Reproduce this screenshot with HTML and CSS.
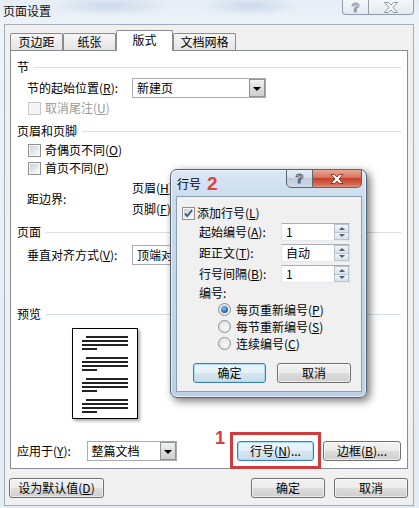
FILE: index.html
```html
<!DOCTYPE html>
<html>
<head>
<meta charset="utf-8">
<link rel="stylesheet" href="styles.css">
</head>
<body>
<div class="win">
  <div class="titlebar">
    <span class="title">页面设置</span>
    <div class="caps">
      <span class="cap cap-help"><span class="q">?</span></span>
      <span class="cap cap-close"><svg width="18" height="11" viewBox="0 0 18 11"><path d="M2.5 0.5h4l2.5 2.6 2.5-2.6h4l-4.5 5 4.5 5h-4l-2.5-2.6-2.5 2.6h-4l4.5-5z" fill="#f6f8fa" stroke="#8d98a4" stroke-width="1"/></svg></span>
    </div>
  </div>

  <div class="client">
    <div class="tabs">
      <div class="tab t1">页边距</div>
      <div class="tab t2">纸张</div>
      <div class="tab t3 sel">版式</div>
      <div class="tab t4">文档网格</div>
    </div>

    <div class="panel">
      <div class="grp g1"><span>节</span></div>
      <div class="row r-start">
        <span class="lbl">节的起始位置(<u>R</u>):</span>
        <div class="combo w133"><span class="ctext">新建页</span><span class="dd"><i></i></span></div>
      </div>
      <div class="row chk r-endnote"><span class="cb dis"></span><span class="dis-t">取消尾注(<u>U</u>)</span></div>

      <div class="grp g2"><span>页眉和页脚</span></div>
      <div class="row chk r-odd"><span class="cb"></span><span>奇偶页不同(<u>O</u>)</span></div>
      <div class="row chk r-first"><span class="cb"></span><span>首页不同(<u>P</u>)</span></div>
      <div class="row r-edge">
        <span class="lbl">距边界:</span>
        <div class="edge-col">
          <div class="edge-row"><span class="elbl">页眉(<u>H</u>):</span><span class="in"></span></div>
          <div class="edge-row"><span class="elbl">页脚(<u>F</u>):</span><span class="in"></span></div>
        </div>
      </div>

      <div class="grp g3"><span>页面</span></div>
      <div class="row r-valign">
        <span class="lbl">垂直对齐方式(<u>V</u>):</span>
        <div class="combo w133"><span class="ctext">顶端对齐</span><span class="dd"><i></i></span></div>
      </div>

      <div class="grp g4"><span>预览</span></div>
      <div class="page">
        <div class="para"><i class="ln first"></i><i class="ln"></i><i class="ln"></i><i class="ln short"></i></div>
        <div class="para"><i class="ln first"></i><i class="ln"></i><i class="ln"></i><i class="ln short"></i></div>
        <div class="para"><i class="ln first"></i><i class="ln"></i><i class="ln"></i><i class="ln short"></i></div>
        <div class="para"><i class="ln first"></i><i class="ln"></i><i class="ln"></i><i class="ln short"></i></div>
      </div>

      <div class="row r-apply">
        <span class="albl">应用于(<u>Y</u>):</span>
        <div class="combo w91"><span class="ctext">整篇文档</span><span class="dd"><i></i></span></div>
        <span class="btn focus b-lineno">行号(<u>N</u>)...</span>
        <span class="btn b-border">边框(<u>B</u>)...</span>
      </div>
    </div>

    <div class="footer">
      <span class="btn b-default">设为默认值(<u>D</u>)</span>
      <span class="spacer"></span>
      <span class="btn b-ok">确定</span>
      <span class="btn b-cancel">取消</span>
    </div>
  </div>

  <div class="mark1">1</div>
  <div class="redbox"></div>

  <div class="sub">
    <div class="sub-title">
      <span class="st">行号</span><span class="mark2">2</span>
      <span class="spacer"></span>
      <span class="scap scap-help"><span class="q2">?</span></span>
      <span class="scap scap-close"><svg width="16" height="10" viewBox="0 0 16 10"><path d="M2 0.5h3.6l2.4 2.4 2.4-2.4H14l-4 4.5 4 4.5h-3.6L8 7.1 5.6 9.5H2l4-4.5z" fill="#ffffff" stroke="#7a2a1c" stroke-width="0.9"/></svg></span>
    </div>
    <div class="sub-client">
      <div class="srow s-add"><span class="cb"><svg width="11" height="11" viewBox="0 0 11 11"><path d="M2 5.5l2.3 2.6L9 2.2" fill="none" stroke="#3d5d92" stroke-width="1.9"/></svg></span><span>添加行号(<u>L</u>)</span></div>
      <div class="srow s-spin"><span class="slbl">起始编号(<u>A</u>):</span><div class="sin"><span class="stext">1</span><span class="spin"><b class="up"></b><b class="down"></b></span></div></div>
      <div class="srow s-spin"><span class="slbl">距正文(<u>T</u>):</span><div class="sin"><span class="stext">自动</span><span class="spin"><b class="up"></b><b class="down"></b></span></div></div>
      <div class="srow s-spin"><span class="slbl">行号间隔(<u>B</u>):</span><div class="sin"><span class="stext">1</span><span class="spin"><b class="up"></b><b class="down"></b></span></div></div>
      <div class="srow s-num"><span>编号:</span></div>
      <div class="srow s-radio r-first-radio"><span class="rb on"></span><span>每页重新编号(<u>P</u>)</span></div>
      <div class="srow s-radio"><span class="rb"></span><span>每节重新编号(<u>S</u>)</span></div>
      <div class="srow s-radio"><span class="rb"></span><span>连续编号(<u>C</u>)</span></div>
      <div class="srow s-btns"><span class="btn focus sb-ok">确定</span><span class="btn sb-cancel">取消</span></div>
    </div>
  </div>
</div>
</body>
</html>
```

FILE: styles.css
```css
* { box-sizing: border-box; }
html, body { margin: 0; padding: 0; }
body {
  width: 419px;
  height: 508px;
  overflow: hidden;
  font-family: "Noto Sans CJK SC", "Noto Sans", sans-serif;
  font-size: 12px;
  line-height: 14px;
  color: #000;
}
u { text-decoration: underline; }

.win {
  position: relative;
  width: 419px;
  height: 508px;
  background:
    radial-gradient(ellipse 60px 10px at 110px 6px, rgba(150,180,215,.35), transparent),
    radial-gradient(ellipse 50px 10px at 250px 6px, rgba(150,180,215,.35), transparent),
    linear-gradient(180deg, #e6edf5 0, #eef3f8 30px, #e3ebf3 100%);
  overflow: hidden;
}

/* main title bar */
.titlebar {
  height: 24px;
  display: flex;
  justify-content: space-between;
  align-items: flex-start;
  padding: 0 5px 0 3px;
}
.title { line-height: 22px; color: #111; }
.caps { display: flex; }
.cap {
  height: 15px;
  border: 1px solid #929daa;
  border-top: none;
  background: linear-gradient(#f4f7fa, #e4eaf0);
  display: flex;
  align-items: center;
  justify-content: center;
}
.cap-help { width: 27px; border-radius: 0 0 0 4px; }
.cap-close { width: 45px; border-left: none; border-radius: 0 0 4px 0; }
.q {
  font-family: "Liberation Sans", sans-serif;
  font-weight: bold;
  font-size: 13px;
  line-height: 13px;
  color: #f6f8fa;
  -webkit-text-stroke: 1px #8d98a4;
}

/* client area */
.client {
  margin-left: 4px;
  width: 410px;
  height: 482px;
  border: 1px solid #a3aebb;
  background: #f0f0f0;
  display: flex;
  flex-direction: column;
}
.tabs {
  height: 25px;
  flex-shrink: 0;
  display: flex;
  align-items: flex-end;
  padding-left: 5px;
}
.tab {
  height: 17px;
  border: 1px solid #898c95;
  border-bottom: none;
  border-radius: 2px 2px 0 0;
  background: linear-gradient(#f6f6f6, #e4e4e4);
  display: flex;
  align-items: center;
  justify-content: center;
}
.t1 { width: 53px; }
.t2 { width: 53px; }
.t3 { width: 57px; }
.t4 { width: 63px; }
.tab.sel {
  position: relative;
  z-index: 1;
  height: 21px;
  margin-bottom: -1px;
  background: #fff;
  padding-bottom: 2px;
}

.panel {
  margin-left: 5px;
  width: 398px;
  height: 419px;
  flex-shrink: 0;
  border: 1px solid #898c95;
  background: #fff;
  padding: 0 6px;
  display: flex;
  flex-direction: column;
}
.grp {
  display: flex;
  align-items: center;
  height: 14px;
  gap: 5px;
  flex-shrink: 0;
}
.grp::after {
  content: "";
  flex: 1;
  height: 1px;
  background: #d5dfe5;
}
.g1 { margin-top: 9px; }
.g2 { margin-top: 9px; }
.g3 { margin-top: 6px; }
.g4 { margin-top: 42px; }

.row { display: flex; align-items: center; flex-shrink: 0; }
.lbl { width: 115px; padding-left: 10px; }
.r-start { margin-top: 4px; height: 20px; }
.chk { height: 14px; padding-left: 11px; gap: 4px; }
.r-endnote { margin-top: 3px; }
.r-odd { margin-top: 5px; }
.r-first { margin-top: 4px; }
.r-edge { margin-top: 3px; height: 41px; }
.edge-col { display: flex; flex-direction: column; gap: 1px; }
.edge-row { height: 20px; display: flex; align-items: center; }
.elbl { width: 60px; }
.in {
  width: 80px;
  height: 18px;
  border: 1px solid #abadb3;
  background: #fff;
}
.r-valign { margin-top: 6px; height: 20px; }

.cb {
  width: 13px;
  height: 13px;
  flex-shrink: 0;
  border: 1px solid #8e8f8f;
  background: linear-gradient(135deg, #c8ccd2 0, #eef0f2 70%, #f8f8f8 100%);
  box-shadow: inset 0 0 0 1px #f6f6f6;
  display: flex;
  align-items: center;
  justify-content: center;
}
.cb.dis { border-color: #c7c7c7; background: #f4f4f4; box-shadow: none; }
.dis-t { color: #9a9a9a; }

.combo {
  height: 20px;
  border: 1px solid #a9abaf;
  background: #fff;
  display: flex;
  align-items: center;
}
.w133 { width: 134px; }
.w91 { width: 91px; }
.ctext { flex: 1; padding-left: 4px; white-space: nowrap; }
.dd {
  width: 16px;
  height: 18px;
  flex-shrink: 0;
  border: 1px solid #8f9296;
  background: linear-gradient(#f2f2f2, #dcdcdc 50%, #cfcfcf);
  display: flex;
  align-items: center;
  justify-content: center;
}
.dd i {
  width: 0; height: 0;
  border-left: 4px solid transparent;
  border-right: 4px solid transparent;
  border-top: 4px solid #000;
  margin-top: 1px;
}

/* preview page */
.page {
  margin-top: 7px;
  margin-left: 55px;
  width: 66px;
  height: 91px;
  flex-shrink: 0;
  border: 1px solid #000;
  background: #fff;
  box-shadow: 2px 2px 3px rgba(0,0,0,.35);
  padding: 7px 0 0 9px;
  display: flex;
  flex-direction: column;
  gap: 7px;
}
.para { display: flex; flex-direction: column; gap: 2px; }
.ln { display: block; width: 46px; height: 2px; background: #222; }
.ln.first { width: 42px; margin-left: 4px; }
.ln.short { width: 15px; }

.r-apply { margin-top: 22px; height: 20px; }
.albl { width: 70px; }
.btn {
  height: 20px;
  border: 1px solid #707070;
  border-radius: 3px;
  background: linear-gradient(#f2f2f2 0, #ebebeb 50%, #dddddd 50%, #cfcfcf 100%);
  box-shadow: inset 0 0 0 1px rgba(255,255,255,.6);
  display: flex;
  align-items: center;
  justify-content: center;
  flex-shrink: 0;
  white-space: nowrap;
}
.btn.focus {
  border-color: #3c7fb1;
  box-shadow: inset 0 0 0 1px #a9dbf6;
  background: linear-gradient(#eaf6fd 0, #e4f0f8 50%, #d6e6f0 50%, #c8dce9 100%);
}
.b-lineno { width: 77px; margin-left: 60px; }
.b-border { width: 78px; margin-left: 9px; }

.footer {
  display: flex;
  margin-top: 9px;
  padding: 0 5px 0 4px;
}
.spacer { flex: 1; }
.b-default { width: 95px; }
.b-ok { width: 74px; }
.b-cancel { width: 74px; margin-left: 9px; }

/* annotations */
.mark1 {
  position: absolute;
  left: 215px;
  top: 428px;
  font-family: "Liberation Sans", sans-serif;
  font-size: 18px;
  line-height: 20px;
  font-weight: bold;
  color: #d64040;
}
.redbox {
  position: absolute;
  left: 230px;
  top: 432px;
  width: 91px;
  height: 37px;
  border: 3px solid #cd3d3d;
}

/* line number dialog */
.sub {
  position: absolute;
  left: 170px;
  top: 169px;
  width: 197px;
  height: 229px;
  border: 1px solid #56626e;
  border-radius: 7px;
  background: linear-gradient(180deg, #dbe8f4 0, #c9dbec 30px, #bcd1e7 100%);
  box-shadow: 3px 3px 9px rgba(0,0,0,.55), inset 0 0 0 1px rgba(255,255,255,.6);
  display: flex;
  flex-direction: column;
}
.sub-title {
  height: 26px;
  display: flex;
  align-items: flex-start;
  padding: 0 4px 0 6px;
  flex-shrink: 0;
}
.st { margin-top: 7px; }
.mark2 {
  margin-left: 6px;
  margin-top: 4px;
  font-family: "Liberation Sans", sans-serif;
  font-size: 19px;
  line-height: 20px;
  font-weight: bold;
  color: #e04040;
}
.scap {
  height: 19px;
  margin-top: -1px;
  border: 1px solid #5b6672;
  display: flex;
  align-items: center;
  justify-content: center;
}
.scap-help {
  width: 27px;
  border-radius: 0 0 0 5px;
  background: linear-gradient(#e6edf4, #d2dde8 50%, #bfcdda 50%, #cdd9e4);
}
.scap-close {
  width: 49px;
  border-left: none;
  border-radius: 0 0 5px 0;
  background: linear-gradient(#e9a897, #d8705a 45%, #c4412a 50%, #d26a52 85%, #e2957f);
}
.q2 {
  font-family: "Liberation Sans", sans-serif;
  font-weight: bold;
  font-size: 13px;
  line-height: 13px;
  color: #f4f6f8;
  -webkit-text-stroke: 1px #56606c;
}
.sub-client {
  margin-left: 5px;
  width: 186px;
  height: 196px;
  border: 1px solid #8aa0b7;
  background: #f0f0f0;
  display: flex;
  flex-direction: column;
}
.srow { display: flex; align-items: center; flex-shrink: 0; }
.s-add { margin-top: 9px; height: 14px; padding-left: 5px; gap: 2px; }
.s-spin { margin-top: 3px; height: 18px; padding-left: 22px; }
.slbl { width: 82px; }
.sin {
  width: 69px;
  height: 18px;
  border: 1px solid #abadb3;
  border-color: #abadb3 #dbdfe6 #e3e9ef #e2e3ea;
  background: #fff;
  display: flex;
  align-items: center;
}
.stext { flex: 1; padding-left: 4px; }
.spin {
  width: 15px;
  height: 16px;
  display: flex;
  flex-direction: column;
}
.spin b {
  flex: 1;
  border: 1px solid #b7c3cf;
  background: linear-gradient(#f2f5f8, #d8e1ea);
  display: flex;
  align-items: center;
  justify-content: center;
}
.spin b + b { border-top: none; }
.spin b::after {
  content: "";
  width: 0; height: 0;
  border-left: 3px solid transparent;
  border-right: 3px solid transparent;
}
.spin .up::after { border-bottom: 3px solid #4d5e75; }
.spin .down::after { border-top: 3px solid #4d5e75; }
.s-num { margin-top: 3px; height: 14px; padding-left: 22px; }
.s-radio { height: 17px; padding-left: 41px; gap: 5px; }
.r-first-radio { margin-top: 1px; }
.rb {
  width: 13px;
  height: 13px;
  border-radius: 50%;
  border: 1px solid #8e8f8f;
  background: radial-gradient(circle at 60% 60%, #f8f8f8 0, #d9dce0 100%);
  display: flex;
  align-items: center;
  justify-content: center;
}
.rb.on::after {
  content: "";
  width: 7px;
  height: 7px;
  border-radius: 50%;
  background: radial-gradient(circle at 40% 35%, #8ec4ee 0, #2b6cb0 60%, #1a4a82 100%);
}
.s-btns { margin-top: 11px; padding-left: 16px; }
.sb-ok { width: 73px; }
.sb-cancel { width: 74px; margin-left: 11px; }
```
